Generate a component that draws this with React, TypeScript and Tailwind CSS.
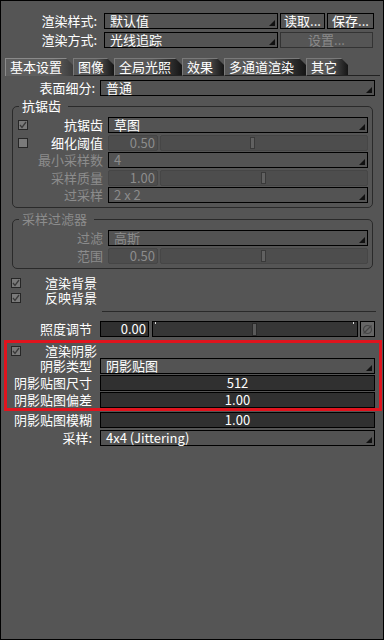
import React from "react";

// ── Render settings panel ───────────────────────────────────

const FIELD = "h-[16px] border border-black text-[13px] leading-[14px]";

function cn(...c: (string | false | undefined)[]) {
  return c.filter(Boolean).join(" ");
}

function Tri() {
  return (
    <svg width="6" height="6" viewBox="0 0 6 6" className="self-end mb-[2px] mr-[2px] shrink-0">
      <polygon points="6,0 6,6 0,6" fill="#111" />
    </svg>
  );
}

function Dropdown({ text, w, dim }: { text: string; w: string; dim?: boolean }) {
  return (
    <div className={`${FIELD} ${w} flex bg-[#535353] pl-[5px] ${dim ? "text-[#8c8c8c]" : "text-white"}`}>
      <span className="flex-1 whitespace-nowrap">{text}</span>
      <Tri />
    </div>
  );
}

function Button({ text, w, dim }: { text: string; w: string; dim?: boolean }) {
  return (
    <div
      className={cn(
        "h-[16px] border text-[13px] leading-[14px] text-center bg-[#555] whitespace-nowrap",
        w,
        dim ? "border-[#333] text-[#8a8a8a]" : "border-black text-white"
      )}
    >
      {text}
    </div>
  );
}

function Check({ on }: { on?: boolean }) {
  return (
    <div className="w-[10px] h-[10px] border border-[#262626] bg-[#7a7a7a] flex items-center justify-center shrink-0">
      {on && (
        <svg width="8" height="8" viewBox="0 0 8 8">
          <path d="M1 4 L3 6.5 L7 1" stroke="#3a3a3a" strokeWidth="1.3" fill="none" />
        </svg>
      )}
    </div>
  );
}

function NumSlider({ value, thumb }: { value: string; thumb: string }) {
  return (
    <div className="flex h-[16px] w-[260px] gap-[2px]">
      <div className="w-[50px] h-full border border-[#464646] bg-[#4d4d4d] text-[#8c8c8c] text-[13px] leading-[14px] text-right pr-[2px] rounded-[2px]">
        {value}
      </div>
      <div className="flex-1 h-full border border-[#464646] bg-[#4d4d4d] rounded-[2px] flex items-center">
        <div className={cn("w-[5px] h-[12px] bg-[#616161] border border-[#3a3a3a]", thumb)} />
      </div>
    </div>
  );
}

function GroupRow({ label, dim, check, children, mt }: { label: string; dim?: boolean; check?: "on" | "off"; children: React.ReactNode; mt: string }) {
  return (
    <div className={cn("flex h-[16px] items-center", mt)}>
      <div className="w-[90px] flex items-center">
        <div className="w-[16px] pl-[5px]">{check && <Check on={check === "on"} />}</div>
        <span className={cn("flex-1 text-right text-[13px] leading-[16px] whitespace-nowrap", dim ? "text-[#8c8c8c]" : "text-white")}>{label}</span>
      </div>
      <div className="ml-[5px]">{children}</div>
    </div>
  );
}

function Tab({ text, w, active }: { text: string; w: string; active?: boolean }) {
  return (
    <div
      className={cn(
        "h-[18px] border-l border-t text-[13px] leading-[16px] pl-[4px] text-white whitespace-nowrap [clip-path:polygon(0_0,calc(100%-7px)_0,100%_7px,100%_100%,0_100%)]",
        w,
        active
          ? "border-[#8a8a8a] bg-[linear-gradient(to_right,#5f5f5f_70%,#3c3c3c)]"
          : "border-[#7a7a7a] border-b border-b-[#222] bg-[linear-gradient(to_right,#585858_55%,#151515)]"
      )}
    >
      {text}
    </div>
  );
}

function ShadowRow({ label, mt, children }: { label: string; mt: string; children: React.ReactNode }) {
  return (
    <div className={cn("flex h-[16px]", mt)}>
      <span className="w-[91px] text-right text-[13px] leading-[16px] text-white whitespace-nowrap">{label}</span>
      <div className="ml-[8px]">{children}</div>
    </div>
  );
}

function DarkField({ text }: { text: string }) {
  return (
    <div className={cn(FIELD, "w-[275px] bg-[#303030] text-white text-center")}>{text}</div>
  );
}

function CheckRow({ label, mt }: { label: string; mt: string }) {
  return (
    <div className={cn("flex items-center h-[15px]", mt)}>
      <div className="ml-[10px]"><Check on /></div>
      <span className="ml-[24px] text-[13px] leading-[15px]">{label}</span>
    </div>
  );
}

export default function App() {
  return (
    <div className="relative w-[384px] h-[640px] bg-[#555] border border-black overflow-hidden text-white font-['Noto_Sans_CJK_SC','Noto_Sans',sans-serif]">
      {/* 顶部 */}
      <div className="flex h-[16px] mt-[12px]">
        <span className="w-[96px] text-right text-[13px] leading-[16px]">渲染样式:</span>
        <div className="ml-[7px]"><Dropdown text="默认值" w="w-[174px]" /></div>
        <div className="ml-[2px]"><Button text="读取..." w="w-[45px]" /></div>
        <div className="ml-[2px]"><Button text="保存..." w="w-[47px]" /></div>
      </div>
      <div className="flex h-[16px] mt-[3px]">
        <span className="w-[96px] text-right text-[13px] leading-[16px]">渲染方式:</span>
        <div className="ml-[7px]"><Dropdown text="光线追踪" w="w-[174px]" /></div>
        <div className="ml-[2px]"><Button text="设置..." w="w-[93px]" dim /></div>
      </div>

      {/* 标签页 */}
      <div className="flex mt-[10px] pl-[4px] pr-[3px]">
        <Tab text="基本设置" w="w-[68px]" active />
        <Tab text="图像" w="w-[41px]" />
        <Tab text="全局光照" w="w-[68px]" />
        <Tab text="效果" w="w-[42px]" />
        <Tab text="多通道渲染" w="w-[82px]" />
        <Tab text="其它" w="w-[42px]" />
        <div className="flex-1 border-b border-[#222] h-[18px]" />
      </div>

      <div className="flex h-[16px] mt-[4px]">
        <span className="w-[94px] text-right text-[13px] leading-[16px]">表面细分:</span>
        <div className="ml-[5px]"><Dropdown text="普通" w="w-[275px]" /></div>
      </div>

      {/* 抗锯齿 */}
      <fieldset className="ml-[11px] w-[361px] mt-[2px] border border-[#2a2a2a] rounded-[5px] pb-[4px]">
        <legend className="ml-[6px] pl-[3px] pr-[7px] text-[13px] leading-[16px] text-white">抗锯齿</legend>
        <div className="pt-[3px]">
          <GroupRow label="抗锯齿" check="on" mt="mt-0">
            <Dropdown text="草图" w="w-[260px]" />
          </GroupRow>
          <GroupRow label="细化阈值" check="off" mt="mt-[2px]">
            <NumSlider value="0.50" thumb="ml-[89px]" />
          </GroupRow>
          <GroupRow label="最小采样数" dim mt="mt-[1px]">
            <Dropdown text="4" w="w-[260px]" dim />
          </GroupRow>
          <GroupRow label="采样质量" dim mt="mt-[2px]">
            <NumSlider value="1.00" thumb="ml-[100px]" />
          </GroupRow>
          <GroupRow label="过采样" dim mt="mt-[1px]">
            <Dropdown text="2 x 2" w="w-[260px]" dim />
          </GroupRow>
        </div>
      </fieldset>

      {/* 采样过滤器 */}
      <fieldset className="ml-[11px] w-[361px] mt-[3px] border border-[#2a2a2a] rounded-[5px] pb-[4px]">
        <legend className="ml-[6px] pl-[3px] pr-[7px] text-[13px] leading-[16px] text-[#8c8c8c]">采样过滤器</legend>
        <div className="pt-[3px]">
          <GroupRow label="过滤" dim mt="mt-0">
            <Dropdown text="高斯" w="w-[260px]" dim />
          </GroupRow>
          <GroupRow label="范围" dim mt="mt-[2px]">
            <NumSlider value="0.50" thumb="ml-[100px]" />
          </GroupRow>
        </div>
      </fieldset>

      <CheckRow label="渲染背景" mt="mt-[6px]" />
      <CheckRow label="反映背景" mt="mt-0" />

      <div className="ml-[101px] w-[274px] h-px bg-[#2a2a2a] mt-[6px]" />

      {/* 照度调节 */}
      <div className="flex h-[16px] mt-[9px]">
        <span className="w-[91px] text-right text-[13px] leading-[16px]">照度调节</span>
        <div className={cn(FIELD, "ml-[8px] w-[49px] bg-[#303030] text-right pr-[2px]")}>0.00</div>
        <div className="ml-[3px] w-[206px] h-[16px] border border-black bg-[#363636] flex items-center">
          <div className="self-start w-px h-[2px] bg-[#ddd] ml-[2px]" />
          <div className="w-[5px] h-[13px] bg-[#5a5a5a] border border-[#2a2a2a] ml-[96px]" />
          <div className="flex-1" />
          <div className="self-start w-px h-[2px] bg-[#ddd] mr-[3px]" />
        </div>
        <div className="ml-[2px] w-[15px] h-[16px] border border-black bg-[#666] flex items-center justify-center">
          <svg width="11" height="11" viewBox="0 0 11 11">
            <circle cx="5.5" cy="5.5" r="4" stroke="#444" strokeWidth="1.2" fill="none" />
            <line x1="1.5" y1="9.5" x2="9.5" y2="1.5" stroke="#444" strokeWidth="1.2" />
          </svg>
        </div>
      </div>

      {/* 阴影 */}
      <CheckRow label="渲染阴影" mt="mt-[6px]" />
      <ShadowRow label="阴影类型" mt="mt-0">
        <Dropdown text="阴影贴图" w="w-[275px]" />
      </ShadowRow>
      <ShadowRow label="阴影贴图尺寸" mt="mt-[1px]">
        <DarkField text="512" />
      </ShadowRow>
      <ShadowRow label="阴影贴图偏差" mt="mt-[1px]">
        <DarkField text="1.00" />
      </ShadowRow>
      <ShadowRow label="阴影贴图模糊" mt="mt-[4px]">
        <DarkField text="1.00" />
      </ShadowRow>
      <ShadowRow label="采样:" mt="mt-[2px]">
        <Dropdown text="4x4 (Jittering)" w="w-[275px]" />
      </ShadowRow>

      {/* 标注框 */}
      <div className="absolute left-[3px] top-[339px] w-[378px] h-[71px] border-[3px] border-[#e0141e] pointer-events-none" />
    </div>
  );
}
